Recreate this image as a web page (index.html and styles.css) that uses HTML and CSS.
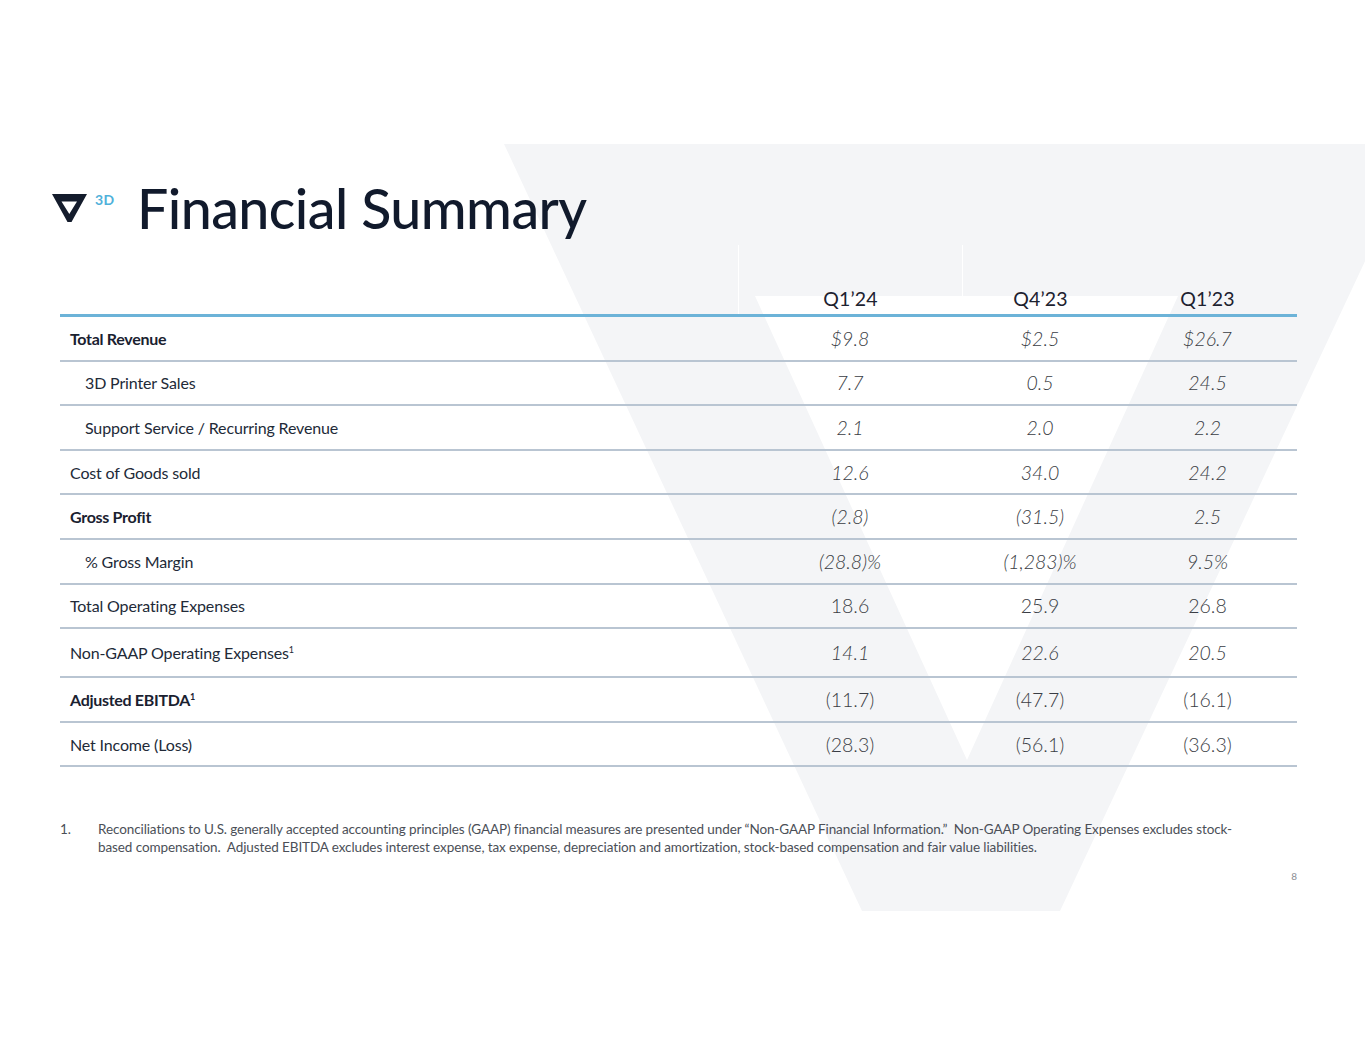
FILE: index.html
```html
<!DOCTYPE html>
<html lang="en">
<head>
<meta charset="utf-8">
<title>Financial Summary</title>
<link rel="stylesheet" href="styles.css">
</head>
<body>
<div class="slide">
  <svg class="bg-v" viewBox="0 0 1365 1055" width="1365" height="1055" aria-hidden="true">
    <path fill="#f4f5f7" fill-rule="evenodd" d="M504 144 L1420 144 L1060 911 L862 911 Z M755 296 L1178 296 L967 760 Z"/>
  </svg>
  <div class="content">
    <header class="title-row">
      <div class="logo">
        <svg class="logo-mark" viewBox="0 0 35 28" width="35" height="28" aria-hidden="true">
          <path fill="#141c2c" fill-rule="evenodd" d="M0 0 L35 0 L19.5 28 L15.5 28 Z M9.5 7.5 L25 7.5 L17.3 20 Z"/>
        </svg>
        <span class="logo-3d">3D</span>
      </div>
      <h1 class="title">Financial Summary</h1>
    </header>

    <div class="fin-table">
      <div class="row head">
        <div class="cell label"></div>
        <div class="cell col c1">Q1’24</div>
        <div class="cell col c2">Q4’23</div>
        <div class="cell col c3">Q1’23</div>
      </div>
      <div class="row">
        <div class="cell label strong">Total Revenue</div>
        <div class="cell num it">$9.8</div>
        <div class="cell num it">$2.5</div>
        <div class="cell num it">$26.7</div>
      </div>
      <div class="row">
        <div class="cell label sub">3D Printer Sales</div>
        <div class="cell num it">7.7</div>
        <div class="cell num it">0.5</div>
        <div class="cell num it">24.5</div>
      </div>
      <div class="row">
        <div class="cell label sub">Support Service / Recurring Revenue</div>
        <div class="cell num it">2.1</div>
        <div class="cell num it">2.0</div>
        <div class="cell num it">2.2</div>
      </div>
      <div class="row">
        <div class="cell label">Cost of Goods sold</div>
        <div class="cell num it">12.6</div>
        <div class="cell num it">34.0</div>
        <div class="cell num it">24.2</div>
      </div>
      <div class="row">
        <div class="cell label strong">Gross Profit</div>
        <div class="cell num it">(2.8)</div>
        <div class="cell num it">(31.5)</div>
        <div class="cell num it">2.5</div>
      </div>
      <div class="row">
        <div class="cell label sub">% Gross Margin</div>
        <div class="cell num it">(28.8)%</div>
        <div class="cell num it">(1,283)%</div>
        <div class="cell num it">9.5%</div>
      </div>
      <div class="row">
        <div class="cell label">Total Operating Expenses</div>
        <div class="cell num">18.6</div>
        <div class="cell num">25.9</div>
        <div class="cell num">26.8</div>
      </div>
      <div class="row tall">
        <div class="cell label">Non-GAAP Operating Expenses<sup>1</sup></div>
        <div class="cell num it">14.1</div>
        <div class="cell num it">22.6</div>
        <div class="cell num it">20.5</div>
      </div>
      <div class="row">
        <div class="cell label strong">Adjusted EBITDA<sup>1</sup></div>
        <div class="cell num">(11.7)</div>
        <div class="cell num">(47.7)</div>
        <div class="cell num">(16.1)</div>
      </div>
      <div class="row">
        <div class="cell label">Net Income (Loss)</div>
        <div class="cell num">(28.3)</div>
        <div class="cell num">(56.1)</div>
        <div class="cell num">(36.3)</div>
      </div>
    </div>

    <div class="footnote">
      <span class="fn-num">1.</span>
      <p class="fn-text">Reconciliations to U.S. generally accepted accounting principles (GAAP) financial measures are presented under “Non-GAAP Financial Information.”&nbsp; Non-GAAP Operating Expenses excludes stock-<br>based compensation.&nbsp; Adjusted EBITDA excludes interest expense, tax expense, depreciation and amortization, stock-based compensation and fair value liabilities.</p>
    </div>
    <div class="page-num">8</div>
  </div>
</div>
</body>
</html>
```

FILE: styles.css
```css
* { box-sizing: border-box; }

html, body {
  margin: 0;
  padding: 0;
  background: #ffffff;
}

body {
  font-family: "Lato", "Noto Sans", "Liberation Sans", sans-serif;
  color: #1d2433;
}

.slide {
  position: relative;
  width: 1365px;
  height: 1055px;
  overflow: hidden;
  background: #ffffff;
}

.bg-v {
  position: absolute;
  left: 0;
  top: 0;
  z-index: 0;
}

.content {
  position: relative;
  z-index: 1;
  display: flex;
  flex-direction: column;
  padding: 180px 68px 0 60px;
}

/* Title */
.title-row {
  display: flex;
  align-items: flex-start;
  height: 65px;
}

.logo {
  display: flex;
  align-items: flex-start;
  margin-left: -8px;
  margin-top: 14px;
  width: 85px;
}

.logo-mark {
  display: block;
}

.logo-3d {
  margin-left: 8px;
  margin-top: -1px;
  font-size: 14px;
  font-weight: 700;
  line-height: 14px;
  color: #4fb1da;
  letter-spacing: 0.3px;
}

.title {
  margin: 0;
  font-size: 55.5px;
  line-height: 56px;
  font-weight: 500;
  color: #111a2c;
  letter-spacing: -0.55px;
}

/* Table */
.fin-table {
  display: flex;
  flex-direction: column;
  width: 1237px;
}

.row {
  display: grid;
  grid-template-columns: 678px 224px 156px 179px;
  align-items: center;
  height: 44.6px;
  border-bottom: 2px solid #b9c5d2;
}

.row.tall {
  height: 49px;
}

.row.head {
  height: 72px;
  align-items: stretch;
  border-bottom: 3px solid #6cb3d8;
}

.row.head .col {
  display: flex;
  align-items: flex-end;
  justify-content: center;
  padding-bottom: 4px;
  font-size: 19.5px;
  color: #1d2230;
  letter-spacing: 0.2px;
}

.row.head .c1,
.row.head .c2 {
  border-left: 1px solid #ffffff;
}

.cell.label {
  padding-left: 10px;
  font-size: 16px;
  color: #222a38;
  letter-spacing: -0.15px;
}

.cell.label.sub {
  padding-left: 25px;
}

.cell.label.strong {
  font-weight: 700;
  color: #1a2130;
  letter-spacing: -0.3px;
}

.cell.label sup {
  font-size: 9px;
  vertical-align: 6px;
  line-height: 0;
}

.cell.num {
  text-align: center;
  font-size: 19.5px;
  font-weight: 300;
  color: #3a3d44;
}

.cell.num.it {
  font-style: italic;
}

/* Footnote */
.footnote {
  display: flex;
  margin-top: 53px;
  font-size: 13.5px;
  line-height: 18px;
  color: #4b4f57;
}

.fn-num {
  width: 38px;
  flex: none;
}

.fn-text {
  margin: 0;
  white-space: nowrap;
  letter-spacing: -0.1px;
}

.page-num {
  align-self: flex-end;
  width: 1237px;
  margin-top: 14px;
  text-align: right;
  font-size: 10px;
  color: #8a8d93;
}
```
